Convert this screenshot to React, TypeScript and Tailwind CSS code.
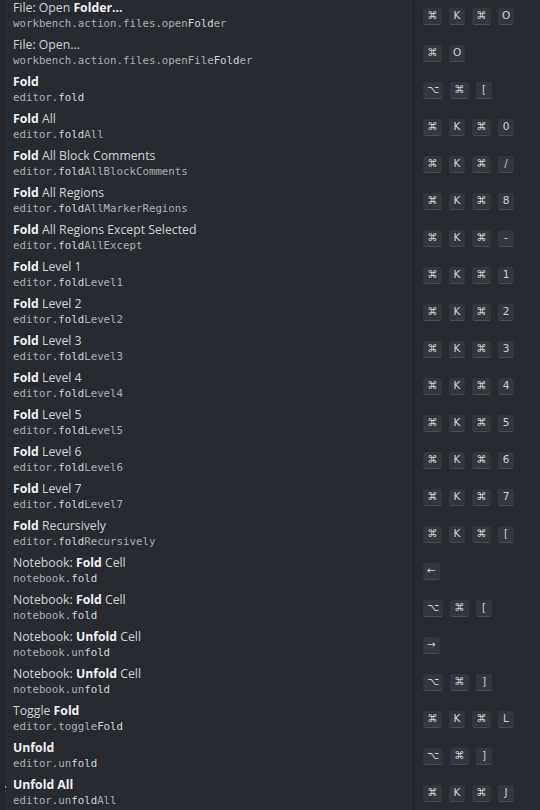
import React from "react";

type Seg = { t: string; b?: boolean };
type Row = { title: Seg[]; id: Seg[]; keys: string[][] };

const r = (title: Seg[], id: Seg[], keys: string[][]): Row => ({ title, id, keys });
const n = (t: string): Seg => ({ t });
const b = (t: string): Seg => ({ t, b: true });

const CK = (x: string) => [["⌘", "K"], ["⌘", x]];

const rows: Row[] = [
  r([n("File: Open "), b("Folder...")], [n("workbench.action.files.open"), b("Fold"), n("er")], CK("O")),
  r([n("File: Open...")], [n("workbench.action.files.openFile"), b("Fold"), n("er")], [["⌘", "O"]]),
  r([b("Fold")], [n("editor."), b("fold")], [["⌥", "⌘", "["]]),
  r([b("Fold"), n(" All")], [n("editor."), b("fold"), n("All")], CK("0")),
  r([b("Fold"), n(" All Block Comments")], [n("editor."), b("fold"), n("AllBlockComments")], CK("/")),
  r([b("Fold"), n(" All Regions")], [n("editor."), b("fold"), n("AllMarkerRegions")], CK("8")),
  r([b("Fold"), n(" All Regions Except Selected")], [n("editor."), b("fold"), n("AllExcept")], CK("-")),
  r([b("Fold"), n(" Level 1")], [n("editor."), b("fold"), n("Level1")], CK("1")),
  r([b("Fold"), n(" Level 2")], [n("editor."), b("fold"), n("Level2")], CK("2")),
  r([b("Fold"), n(" Level 3")], [n("editor."), b("fold"), n("Level3")], CK("3")),
  r([b("Fold"), n(" Level 4")], [n("editor."), b("fold"), n("Level4")], CK("4")),
  r([b("Fold"), n(" Level 5")], [n("editor."), b("fold"), n("Level5")], CK("5")),
  r([b("Fold"), n(" Level 6")], [n("editor."), b("fold"), n("Level6")], CK("6")),
  r([b("Fold"), n(" Level 7")], [n("editor."), b("fold"), n("Level7")], CK("7")),
  r([b("Fold"), n(" Recursively")], [n("editor."), b("fold"), n("Recursively")], CK("[")),
  r([n("Notebook: "), b("Fold"), n(" Cell")], [n("notebook."), b("fold")], [["←"]]),
  r([n("Notebook: "), b("Fold"), n(" Cell")], [n("notebook."), b("fold")], [["⌥", "⌘", "["]]),
  r([n("Notebook: "), b("Unfold"), n(" Cell")], [n("notebook.un"), b("fold")], [["→"]]),
  r([n("Notebook: "), b("Unfold"), n(" Cell")], [n("notebook.un"), b("fold")], [["⌥", "⌘", "]"]]),
  r([n("Toggle "), b("Fold")], [n("editor.toggle"), b("Fold")], CK("L")),
  r([b("Unfold")], [n("editor.un"), b("fold")], [["⌥", "⌘", "]"]]),
  r([b("Unfold All")], [n("editor.un"), b("fold"), n("All")], CK("J")),
];

function Cap({ k }: { k: string }) {
  const wide = k === "⌘" || k === "⌥";
  return (
    <span
      className={
        "inline-flex h-[17px] items-center justify-center rounded-[3px] bg-[#33363c] border-b border-[#4a4d53] text-[10.5px] text-[#d2d2d2] " +
        (wide ? "min-w-[19px] px-[4px]" : "min-w-[16px] px-[4px]")
      }
      style={{ fontFamily: '"DejaVu Sans", sans-serif' }}
    >
      {k}
    </span>
  );
}

export default function App() {
  return (
    <div className="relative w-[540px] h-[810px] overflow-hidden bg-[#272a30] border-l-[5px] border-[#222529]">
      {rows.map((row, i) => (
        <div key={i} className="flex h-[37px]">
          <div className="w-[409px] shrink-0 border-r border-[#1e2125] pl-[8px]">
            <div
              className="h-[16px] leading-[16px] text-[12.25px] text-[#d2d3d5] whitespace-nowrap"
              style={{ fontFamily: '"Open Sans", "Noto Sans", sans-serif' }}
            >
              {row.title.map((s, j) => (
                <span key={j} className={s.b ? "font-bold text-[#f0f1f3]" : ""}>
                  {s.t}
                </span>
              ))}
            </div>
            <div
              className="h-[15px] leading-[15px] text-[10.75px] text-[#aeb0b3] whitespace-nowrap"
              style={{ fontFamily: '"DejaVu Sans Mono", monospace' }}
            >
              {row.id.map((s, j) => (
                <span key={j} className={s.b ? "text-[#d6d8db]" : ""}>
                  {s.t}
                </span>
              ))}
            </div>
          </div>
          <div className="flex items-start pt-[8px] pl-[9px] gap-[7px]">
            {row.keys.map((chord, ci) => (
              <div key={ci} className="flex gap-[7px]">
                {chord.map((k, ki) => (
                  <Cap key={ki} k={k} />
                ))}
              </div>
            ))}
          </div>
        </div>
      ))}
      <svg className="absolute left-[-5px] top-[781px]" width="8" height="12" viewBox="0 0 8 12">
        <path d="M0 0 L0 10 L2.5 7.5 L4.5 11 L6 10 L4 6.8 L7.5 6.8 Z" fill="#ffffff" stroke="#000" strokeWidth="0.6" />
      </svg>
    </div>
  );
}
